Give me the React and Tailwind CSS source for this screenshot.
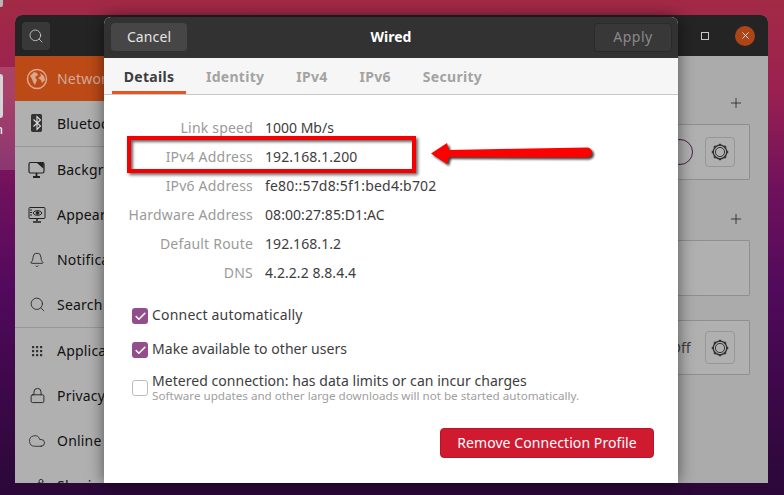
import React from "react";
import { Search, Bell, Lock, Cloud, Share2, Plus, X, Check } from "lucide-react";

const font = { fontFamily: '"Noto Sans", sans-serif' };

function Globe() {
  return (
    <svg width="22" height="22" viewBox="0 0 22 22">
      <circle cx="11" cy="11" r="9.500" fill="none" stroke="#dca68c" strokeWidth="1.500" />
      <path d="M4 8l4-4 3 1 1 2-3 2 2 3-2 5-2-3-1-3zM14 5l4 3 1 4-3 3-1-3-3-2 3-2z" fill="#dca68c" />
    </svg>
  );
}
function Bluetooth() {
  return (
    <svg width="14" height="20" viewBox="0 0 14 20">
      <rect x="1" y="1" width="11" height="16" rx="1.500" fill="#333" transform="scale(1 1.12)" />
      <path d="M3.500 6.500l7 6.500-3.500 3.500V3.500L10.500 7 3.500 13.500" fill="none" stroke="#ddd" strokeWidth="1.100" />
    </svg>
  );
}
function MonitorBg() {
  return (
    <svg width="18" height="18" viewBox="0 0 18 18" fill="none" stroke="#222" strokeWidth="1.200">
      <rect x="1" y="1.500" width="15" height="10.500" rx="1.500" />
      <path d="M10 2l5 0 0 4.500z" fill="#222" />
      <path d="M8.500 12v3M5 16h7" strokeWidth="1.800" />
    </svg>
  );
}
function MonitorEye() {
  return (
    <svg width="18" height="18" viewBox="0 0 18 18" fill="none" stroke="#222" strokeWidth="1">
      <rect x="1" y="1.500" width="16" height="11" rx="1" />
      <path d="M2 4h2M2 6.500h2M2 9h2" />
      <path d="M5 7c2-3.200 7-3.200 9 0-2 3.200-7 3.200-9 0z" />
      <circle cx="9.500" cy="7" r="1.400" fill="#222" />
      <path d="M9 13v2M5 16h8" strokeWidth="1.600" />
    </svg>
  );
}
function Dots() {
  return (
    <svg width="12" height="12" viewBox="0 0 12 12" fill="#333">
      {[1, 5, 9].flatMap((y) =>
        [1, 5, 9].map((x) => <rect key={`${x}-${y}`} x={x} y={y} width="2.200" height="2.200" />)
      )}
    </svg>
  );
}
function Gear() {
  const teeth = [0, 45, 90, 135, 180, 225, 270, 315];
  return (
    <svg width="18" height="18" viewBox="0 0 18 18" fill="none" stroke="#333">
      <circle cx="9" cy="9" r="6.800" strokeWidth="1.300" />
      <circle cx="9" cy="9" r="4.600" strokeWidth="1" />
      {teeth.map((a) => (
        <rect key={a} x="7.800" y="0.800" width="2.400" height="2" fill="#333" stroke="none" transform={`rotate(${a} 9 9)`} />
      ))}
    </svg>
  );
}

function SideRow({ icon, label, active, divider }) {
  return (
    <div className={`flex shrink-0 items-center gap-[9px] pl-[11px] ${divider ? "h-[46px] border-b border-[#979797] pb-px" : "h-[45px]"} ${active ? "bg-[#bc4a16] text-[#d2ab99]" : "text-[#111111]"}`}>
      <span className="flex w-[22px] shrink-0 justify-center">{icon}</span>
      <span className="whitespace-nowrap text-[14px] tracking-[0.2px]">{label}</span>
    </div>
  );
}

function GearButton({ h }) {
  return (
    <div className={`flex w-[30px] items-center justify-center rounded-[4px] border border-[#979797] bg-[#b0b0b0] ${h}`}>
      <Gear />
    </div>
  );
}

function Frame({ h, children }) {
  return (
    <div className={`flex shrink-0 items-center justify-end rounded-[1px] border border-[#8f8f8f] bg-[#b0b0b0] pr-[14px] ${h}`}>{children}</div>
  );
}

function Info({ label, value, track }) {
  return (
    <div className="flex h-[29px] items-center text-[14px]">
      <span className="w-[149px] shrink-0 whitespace-nowrap text-right tracking-[0.2px] text-[#9a9a9a]">{label}</span>
      <span className={`ml-[12px] whitespace-nowrap text-[#3d3d3d] ${track}`}>{value}</span>
    </div>
  );
}

function CheckRow({ checked, children, className }) {
  return (
    <div className={`flex items-start gap-[4px] ${className}`}>
      <span className={`flex h-[16px] w-[16px] shrink-0 items-center justify-center rounded-[3px] ${checked ? "bg-[#924d8b]" : "border border-[#bdbdbd] bg-white"}`}>
        {checked && <Check size={13} strokeWidth={3} color="#fff" />}
      </span>
      {children}
    </div>
  );
}

export default function App() {
  return (
    <div style={font} className="relative h-[495px] w-[784px] overflow-hidden bg-[linear-gradient(180deg,#a32a45_0%,#9a2150_18%,#70115c_38%,#520a5c_58%,#3c0848_80%,#2a0838_100%)]">
      {/* desktop icon remains */}
      <div className="absolute left-0 top-[67px] h-[103px] w-[15px] bg-white/15" />
      <div className="absolute left-0 top-[74px] h-[44px] w-[3px] rounded-r-[3px] bg-[#d5d5d5]" />
      <div className="absolute left-0 top-0 h-[7px] w-[3px] rounded-br-[2px] bg-[#b5b5b5]" />
      <div className="absolute left-[-4px] top-[15px] text-[12px] leading-[16px] text-[#f0a040]">l</div>
      <div className="absolute left-[-5px] top-[120px] text-[13px] leading-[18px] text-white">n</div>

      {/* settings window */}
      <div className="absolute left-[15px] top-[15px] flex h-[468px] w-[753px] flex-col overflow-hidden rounded-t-[7px] bg-[#ababab]">
        <div className="flex h-[41px] shrink-0 items-center justify-between bg-[#242424] pl-[7px] pr-[13px]">
          <div className="flex h-[28px] w-[28px] items-center justify-center rounded-[4px] bg-[#383838]">
            <Search size={16} color="#c8c8c8" strokeWidth={1.300} />
          </div>
          <div className="flex items-center gap-[26px]">
            <span className="h-[8px] w-[8px] border border-[#c8c8c8]" />
            <span className="flex h-[20px] w-[20px] items-center justify-center rounded-full bg-[#ae4518]">
              <X size={11} color="#e8e8e8" strokeWidth={2} />
            </span>
          </div>
        </div>
        <div className="flex min-h-0 flex-1">
          <div className="flex w-[170px] shrink-0 flex-col overflow-hidden bg-[#b0b0b0]">
            <SideRow active icon={<Globe />} label="Network" />
            <SideRow divider icon={<Bluetooth />} label="Bluetooth" />
            <SideRow icon={<MonitorBg />} label="Background" />
            <SideRow icon={<MonitorEye />} label="Appearance" />
            <SideRow icon={<Bell size={16} color="#222" strokeWidth={1.300} />} label="Notifications" />
            <SideRow divider icon={<Search size={17} color="#222" strokeWidth={1.200} />} label="Search" />
            <SideRow icon={<Dots />} label="Applications" />
            <SideRow icon={<Lock size={17} color="#222" strokeWidth={1.300} />} label="Privacy" />
            <SideRow icon={<Cloud size={18} color="#222" strokeWidth={1.100} />} label="Online Accounts" />
            <SideRow icon={<Share2 size={16} color="#222" strokeWidth={1.200} />} label="Sharing" />
          </div>
          <div className="flex min-w-0 flex-1 flex-col bg-[#ababab] pl-[20px] pr-[18px]">
            <div className="flex h-[68px] shrink-0 items-end justify-end pb-[13px] pr-[6px]">
              <Plus size={16} color="#222" strokeWidth={1.200} />
            </div>
            <Frame h="h-[56px]">
              <GearButton h="h-[30px]" />
            </Frame>
            <div className="flex h-[60px] shrink-0 items-end justify-end pb-[13px] pr-[6px]">
              <Plus size={16} color="#222" strokeWidth={1.200} />
            </div>
            <Frame h="h-[56px]" />
            <div className="h-[24px] shrink-0" />
            <Frame h="h-[55px]">
              <GearButton h="h-[33px]" />
            </Frame>
          </div>
        </div>
      </div>

      {/* toggle and its label, half hidden by the dialog */}
      <div className="absolute left-[667px] top-[139px] h-[26px] w-[26px] rounded-full border border-[#4a1f4a]" />
      <div className="absolute left-[670px] top-[338px] text-[14px] leading-[20px] text-[#3f3f3f]">Off</div>

      {/* dialog */}
      <div className="absolute left-[104px] top-[17px] flex h-[466px] w-[574px] flex-col overflow-hidden rounded-t-[7px] bg-white shadow-[0_0_16px_rgba(0,0,0,0.55)]">
        <div className="relative flex h-[41px] shrink-0 items-center justify-between bg-[#323232] pb-px pl-[7px] pr-[6px]">
          <div className="flex h-[28px] w-[76px] items-center justify-center rounded-[4px] bg-[#464646] pb-[2px] text-[14px] tracking-[0.1px] text-[#e4e4e4]">Cancel</div>
          <div className="absolute inset-x-0 top-[9px] text-center text-[14px] font-bold text-white">Wired</div>
          <div className="flex h-[29px] w-[78px] items-center justify-center rounded-[4px] border border-[#2a2a2a] bg-[#383838] pb-[2px] text-[14px] tracking-[0.5px] text-[#8a8a8a]">Apply</div>
        </div>
        <div className="flex h-[37px] shrink-0 items-stretch border-b border-[#c9c9c9] bg-[#f6f6f6] pl-[8px] text-[14px] font-bold tracking-[0.28px] text-[#a3a3a3]">
          <div className="flex w-[74px] items-center justify-center border-b-[3px] border-[#e95420] pt-[3px] text-[#3d3d3d]">Details</div>
          <div className="ml-[20px] flex items-center">Identity</div>
          <div className="ml-[32px] flex items-center">IPv4</div>
          <div className="ml-[32px] flex items-center">IPv6</div>
          <div className="ml-[32px] flex items-center">Security</div>
        </div>
        <div className="flex min-h-0 flex-1 flex-col pt-[18px]">
          <Info label="Link speed" value="1000 Mb/s" track="" />
          <Info label="IPv4 Address" value="192.168.1.200" track="tracking-[0.08px]" />
          <Info label="IPv6 Address" value="fe80::57d8:5f1:bed4:b702" track="tracking-[0.2px]" />
          <Info label="Hardware Address" value="08:00:27:85:D1:AC" track="tracking-[0.06px]" />
          <Info label="Default Route" value="192.168.1.2" track="tracking-[0.08px]" />
          <Info label="DNS" value="4.2.2.2 8.8.4.4" track="tracking-[0.06px]" />
          <div className="pl-[28px] text-[14px] text-[#3d3d3d]">
            <CheckRow checked className="mt-[21px]">
              <span className="leading-[14px] tracking-[0.2px]">Connect automatically</span>
            </CheckRow>
            <CheckRow checked className="mt-[18px]">
              <span className="leading-[14px] tracking-[0.05px]">Make available to other users</span>
            </CheckRow>
            <CheckRow className="mt-[22px]">
              <div className="mt-[-8px] flex flex-col">
                <span className="whitespace-nowrap leading-[18px] tracking-[0.04px]">Metered connection: has data limits or can incur charges</span>
                <span className="mt-[-1px] whitespace-nowrap text-[11.65px] leading-[14px] text-[#a0a0a0]">Software updates and other large downloads will not be started automatically.</span>
              </div>
            </CheckRow>
          </div>
          <div className="mt-[25px] flex justify-end pr-[24px]">
            <div className="flex h-[30px] w-[214px] items-center justify-center rounded-[4px] border border-[#b8152a] bg-[#d01a30] pb-[2px] text-[14px] tracking-[0.08px] text-white">Remove Connection Profile</div>
          </div>
        </div>
      </div>

      {/* annotation */}
      <div className="absolute left-[127px] top-[136px] h-[37px] w-[289px] border-[4px] border-[#f40000] shadow-[2px_2px_3px_rgba(0,0,0,0.6),inset_2px_2px_3px_rgba(0,0,0,0.6)]" />
      <svg className="absolute left-[428px] top-[140px] drop-shadow-[2px_2px_1px_rgba(0,0,0,0.75)]" width="170" height="28" viewBox="0 0 170 28">
        <path d="M3 13.500L19 3l2 7 138-2.500a5 5 0 0 1 0 10L21 17l-2 7z" fill="#ff0000" />
      </svg>
    </div>
  );
}
